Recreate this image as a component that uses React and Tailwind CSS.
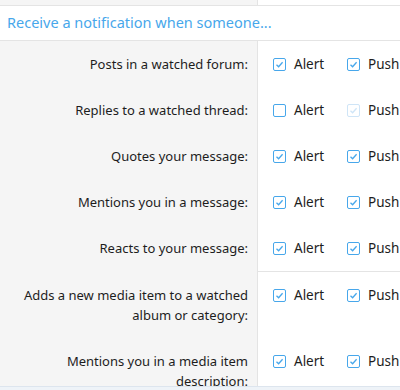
import React from "react";

const Box = ({ state }) => {
  const border = state === "dis" ? "border-[#cfe5f7]" : "border-[#47a7eb]";
  const stroke = state === "dis" ? "#cfe5f7" : "#47a7eb";
  return (
    <span className={`w-[13px] h-[13px] border-[1.5px] ${border} rounded-[2px] bg-white flex items-center justify-center shrink-0`}>
      {state !== "off" && (
        <svg width="9" height="9" viewBox="0 0 9 9">
          <path d="M1.5 4.8 L3.6 6.8 L7.6 2.2" fill="none" stroke={stroke} strokeWidth="1.3" />
        </svg>
      )}
    </span>
  );
};

const Row = ({ label, alert = "on", push = "on", last = false }) => (
  <div className="flex">
    <div className="w-[258px] shrink-0 bg-[#f5f5f5] border-r border-[#e4e4e4] pr-[9px] pl-4 py-[13px] text-right leading-[20px]">
      {label}
    </div>
    <div className={`flex-1 pl-[15px] pt-[13px] pb-[13px] flex items-start text-[13.5px] ${last ? "border-b border-[#e4e4e4]" : ""}`}>
      <div className="flex items-center h-[20px] w-[74px] gap-[8px]">
        <Box state={alert} />
        <span>Alert</span>
      </div>
      <div className="flex items-center h-[20px] gap-[8px]">
        <Box state={push} />
        <span>Push</span>
      </div>
    </div>
  </div>
);

export default function App() {
  return (
    <div
      className="w-[400px] h-[390px] overflow-hidden bg-white text-[#1d1d1d] text-[13px] relative"
      style={{ fontFamily: '"Noto Sans", sans-serif' }}
    >
      <div className="flex h-[5px]">
        <div className="w-[258px] bg-[#f5f5f5] border-r border-[#e4e4e4]" />
        <div className="flex-1" />
      </div>
      <div className="border-t border-b border-[#e4e4e4] h-[36px] flex items-center pl-[7px] text-[14.5px] text-[#47a7eb]">
        Receive a notification when someone...
      </div>
      <div>
        <Row label="Posts in a watched forum:" />
        <Row label="Replies to a watched thread:" alert="off" push="dis" />
        <Row label="Quotes your message:" />
        <Row label="Mentions you in a message:" />
        <Row label="Reacts to your message:" last />
      </div>
      <div>
        <Row label="Adds a new media item to a watched album or category:" />
        <Row label="Mentions you in a media item description:" />
      </div>
      <div className="absolute left-0 right-0 top-[386px] h-[10px] bg-[#eef3f8] border-t border-[#dde5ee]" />
    </div>
  );
}
